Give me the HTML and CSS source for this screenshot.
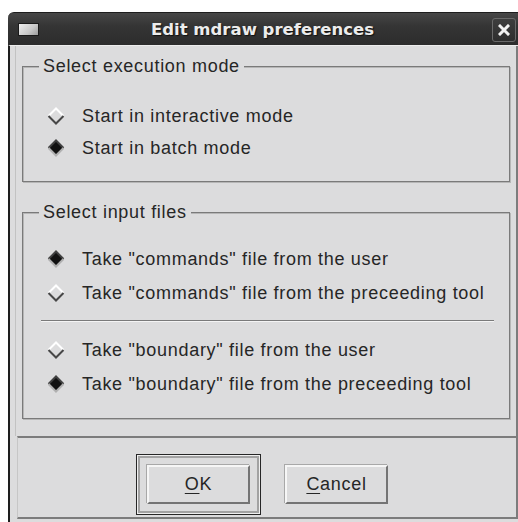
FILE: index.html
```html
<!DOCTYPE html>
<html lang="en">
<head>
<meta charset="utf-8">
<title>Edit mdraw preferences</title>
<link rel="stylesheet" href="styles.css">
</head>
<body>
<div class="window">
  <div class="titlebar">
    <span class="app-icon"></span>
    <span class="title">Edit mdraw preferences</span>
    <span class="close-btn">
      <svg width="12" height="12" viewBox="0 0 12 12"><path d="M2 2 L10 10 M10 2 L2 10" stroke="#f2f2f2" stroke-width="3" stroke-linecap="square"/></svg>
    </span>
  </div>
  <div class="client">
    <div class="upper">
      <div class="group group-mode">
        <div class="legend">Select execution mode</div>
        <div class="rows">
          <div class="radio-row">
            <svg class="diamond" width="18" height="18" viewBox="0 0 18 18"><path d="M1.5 9 L9 1.5 L16.5 9" fill="none" stroke="#ffffff" stroke-width="2"/><path d="M1.5 9 L9 16.5 L16.5 9" fill="none" stroke="#474747" stroke-width="2"/></svg>
            <span>Start in interactive mode</span>
          </div>
          <div class="radio-row">
            <svg class="diamond" width="18" height="18" viewBox="0 0 18 18"><path d="M1.5 9 L9 1.5 L16.5 9 L9 16.5 Z" fill="#111111"/><path d="M1.5 9 L9 1.5 L16.5 9" fill="none" stroke="#404040" stroke-width="2"/><path d="M1.5 9 L9 16.5 L16.5 9" fill="none" stroke="#b0b0b0" stroke-width="2"/></svg>
            <span>Start in batch mode</span>
          </div>
        </div>
      </div>
      <div class="group group-files">
        <div class="legend">Select input files</div>
        <div class="rows">
          <div class="radio-row tall">
            <svg class="diamond" width="18" height="18" viewBox="0 0 18 18"><path d="M1.5 9 L9 1.5 L16.5 9 L9 16.5 Z" fill="#111111"/><path d="M1.5 9 L9 1.5 L16.5 9" fill="none" stroke="#404040" stroke-width="2"/><path d="M1.5 9 L9 16.5 L16.5 9" fill="none" stroke="#b0b0b0" stroke-width="2"/></svg>
            <span>Take "commands" file from the user</span>
          </div>
          <div class="radio-row tall">
            <svg class="diamond" width="18" height="18" viewBox="0 0 18 18"><path d="M1.5 9 L9 1.5 L16.5 9" fill="none" stroke="#ffffff" stroke-width="2"/><path d="M1.5 9 L9 16.5 L16.5 9" fill="none" stroke="#474747" stroke-width="2"/></svg>
            <span>Take "commands" file from the preceeding tool</span>
          </div>
          <div class="separator"></div>
          <div class="radio-row tall">
            <svg class="diamond" width="18" height="18" viewBox="0 0 18 18"><path d="M1.5 9 L9 1.5 L16.5 9" fill="none" stroke="#ffffff" stroke-width="2"/><path d="M1.5 9 L9 16.5 L16.5 9" fill="none" stroke="#474747" stroke-width="2"/></svg>
            <span>Take "boundary" file from the user</span>
          </div>
          <div class="radio-row tall">
            <svg class="diamond" width="18" height="18" viewBox="0 0 18 18"><path d="M1.5 9 L9 1.5 L16.5 9 L9 16.5 Z" fill="#111111"/><path d="M1.5 9 L9 1.5 L16.5 9" fill="none" stroke="#404040" stroke-width="2"/><path d="M1.5 9 L9 16.5 L16.5 9" fill="none" stroke="#b0b0b0" stroke-width="2"/></svg>
            <span>Take "boundary" file from the preceeding tool</span>
          </div>
        </div>
      </div>
    </div>
    <div class="lower">
      <div class="default-ring">
        <button class="btn"><u>O</u>K</button>
      </div>
      <button class="btn"><u>C</u>ancel</button>
    </div>
  </div>
</div>
</body>
</html>
```
FILE: styles.css
```css
html, body {
  margin: 0;
  padding: 0;
  background: #ffffff;
}

body {
  width: 518px;
  height: 522px;
  overflow: hidden;
  font-family: "Liberation Sans", Arial, sans-serif;
  font-size: 18px;
  letter-spacing: 0.7px;
  color: #262626;
}

.window {
  margin: 12px 0 0 8px;
  width: 510px;
  display: flex;
  flex-direction: column;
}

/* ---- title bar ---- */
.titlebar {
  height: 33px;
  display: flex;
  align-items: center;
  background: linear-gradient(#474747, #353535 40%, #2c2c2c);
  border-top-left-radius: 6px;
  border-top: 1px solid #1e1e1e;
  box-sizing: border-box;
  padding: 0 2px 0 10px;
}

.app-icon {
  width: 21px;
  height: 13px;
  box-sizing: border-box;
  border: 1px solid #1a1a1a;
  background: linear-gradient(135deg, #eeeeee, #c8c8c8 60%, #9c9c9c);
}

.title {
  flex: 1;
  text-align: center;
  font-family: "DejaVu Sans", sans-serif;
  font-weight: bold;
  font-size: 16.5px;
  letter-spacing: 0;
  color: #ececec;
  text-shadow: 1px 1px 1px #111;
  padding-right: 6px;
}

.close-btn {
  width: 24px;
  height: 24px;
  box-sizing: border-box;
  border: 1px solid #6a6a6a;
  border-radius: 3px;
  background: linear-gradient(#3e3e3e, #2e2e2e);
  display: flex;
  align-items: center;
  justify-content: center;
  margin-top: 2px;
}

/* ---- client area ---- */
.client {
  height: 477px;
  background: #dcdcdd;
  border-left: 2px solid #1e1e1e;
  border-top: 1px solid #ededed;
  padding-left: 5px;
  box-sizing: border-box;
  display: flex;
  flex-direction: column;
}

.upper {
  border-left: 1px solid #c2c2c2;
  border-right: 2px solid #7c7c7c;
  padding: 0 6px 17px 6px;
}

.group {
  border: 1px solid #7a7a7a;
  box-shadow: 1px 1px 0 #b6b6b6, inset 1px 1px 0 #b6b6b6;
}

.group-mode {
  margin-top: 20px;
  padding-bottom: 17px;
}

.group-files {
  margin-top: 30px;
  padding-bottom: 17px;
}

.legend {
  display: table;
  margin: -11px 0 0 16px;
  padding: 0 4px;
  height: 20px;
  line-height: 20px;
  background: #dcdcdd;
}

.group-mode .rows {
  padding-top: 24px;
}

.group-files .rows {
  padding-top: 20px;
}

.radio-row {
  height: 32px;
  display: flex;
  align-items: center;
  padding-left: 24px;
  white-space: nowrap;
}

.radio-row.tall {
  height: 34px;
}

.diamond {
  flex: none;
  margin-right: 17px;
}

.separator {
  margin: 10px 15px 11px 18px;
  border-top: 1px solid #7a7a7a;
  border-bottom: 1px solid #f4f4f4;
}

/* ---- button area ---- */
.lower {
  margin-left: 2px;
  height: 83px;
  box-sizing: border-box;
  border-top: 2px solid #7c7c7c;
  border-left: 1px solid #c6c6c6;
  border-right: 2px solid #7c7c7c;
  border-bottom: 2px solid #7c7c7c;
  display: flex;
  align-items: flex-start;
  padding: 16px 0 0 118px;
  gap: 24px;
}

.default-ring {
  border: 1px solid #262626;
  padding: 10px;
  box-shadow: inset 0 0 0 1px #efefef, inset 0 0 0 3px #a2a2a2;
}

.btn {
  width: 103px;
  height: 39px;
  margin: 0;
  padding: 0;
  box-sizing: border-box;
  font-family: "Liberation Sans", Arial, sans-serif;
  font-size: 18px;
  letter-spacing: 0.7px;
  color: #262626;
  background: #dcdcdd;
  border-style: solid;
  border-width: 2px;
  border-color: #f6f6f6 #747474 #747474 #f6f6f6;
  box-shadow: -1px -1px 0 #a8a8a8;
}

.lower > .btn {
  margin-top: 11px;
}

.btn u {
  text-decoration-thickness: 1px;
  text-underline-offset: 3px;
}
```
